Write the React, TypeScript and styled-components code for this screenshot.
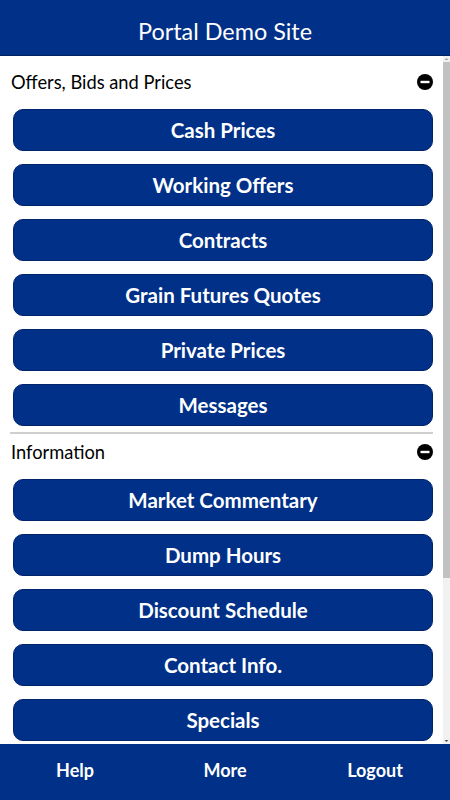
import styled, { createGlobalStyle } from 'styled-components';

const BLUE = '#003087';

const sections = [
  {
    title: 'Offers, Bids and Prices',
    links: ['Cash Prices', 'Working Offers', 'Contracts', 'Grain Futures Quotes', 'Private Prices', 'Messages'],
  },
  {
    title: 'Information',
    links: ['Market Commentary', 'Dump Hours', 'Discount Schedule', 'Contact Info.', 'Specials'],
  },
];

const MinusIcon = () => (
  <svg width="16" height="16" viewBox="0 0 16 16">
    <circle cx="8" cy="8" r="8" fill="#000" />
    <rect x="3.5" y="6.8" width="9" height="2.4" fill="#fff" />
  </svg>
);

const Arrow = ({ up, color }: { up?: boolean; color: string }) => (
  <svg width="7" height="6" viewBox="0 0 7 6">
    <polygon points={up ? '3.5,2 5.5,4 1.5,4' : '1.5,2 5.5,2 3.5,4'} fill={color} />
  </svg>
);

export default function App() {
  return (
    <>
      <GlobalStyle />
      <Page>
        <Header>Portal Demo Site</Header>
        <ScrollArea>
          <Content>
            {sections.map((section, i) => (
              <Section key={section.title} $divided={i < sections.length - 1}>
                <SectionHead>
                  <SectionTitle>{section.title}</SectionTitle>
                  <MinusIcon />
                </SectionHead>
                <LinkList>
                  {section.links.map((link) => (
                    <LinkButton key={link}>{link}</LinkButton>
                  ))}
                </LinkList>
              </Section>
            ))}
          </Content>
          <ScrollTrack>
            <Arrow up color="#a3a3a3" />
            <ThumbLane>
              <Thumb />
            </ThumbLane>
            <Arrow color="#505050" />
          </ScrollTrack>
        </ScrollArea>
        <Footer>
          <FooterItem>Help</FooterItem>
          <FooterItem>More</FooterItem>
          <FooterItem>Logout</FooterItem>
        </Footer>
      </Page>
    </>
  );
}

const GlobalStyle = createGlobalStyle`
  html, body {
    margin: 0;
    padding: 0;
    height: 100%;
    font-family: Lato, 'Liberation Sans', sans-serif;
  }
  #root {
    height: 100%;
  }
`;

const Page = styled.div`
  height: 800px;
  display: flex;
  flex-direction: column;
  background: #fff;
`;

const Header = styled.div`
  height: 56px;
  box-sizing: border-box;
  padding-top: 6px;
  flex: 0 0 auto;
  background: ${BLUE};
  color: #fff;
  font-size: 23.4px;
  display: flex;
  align-items: center;
  justify-content: center;
  border-bottom: 1px solid #00205f;
`;

const ScrollArea = styled.div`
  flex: 1;
  min-height: 0;
  display: flex;
`;

const Content = styled.div`
  flex: 1;
  overflow: hidden;
  padding-top: 8px;
`;

const ScrollTrack = styled.div`
  width: 7px;
  flex: 0 0 7px;
  background: #f1f1f1;
  display: flex;
  flex-direction: column;
`;

const ThumbLane = styled.div`
  flex: 1;
`;

const Thumb = styled.div`
  height: 516px;
  background: #c1c1c1;
`;

const Section = styled.section<{ $divided: boolean }>`
  margin: 0 10px;
  padding-bottom: 6px;
  border-bottom: ${(p) => (p.$divided ? '2px solid #cfcfcf' : 'none')};
`;

const SectionHead = styled.div`
  height: 36px;
  display: flex;
  align-items: center;
  justify-content: space-between;
  padding-left: 1px;
`;

const SectionTitle = styled.span`
  font-size: 18.3px;
  color: #000;
`;

const LinkList = styled.div`
  display: flex;
  flex-direction: column;
  gap: 13px;
  margin-top: 9px;
  padding-left: 3px;
`;

const LinkButton = styled.button`
  height: 42px;
  border: 1px solid #00246a;
  border-radius: 10px;
  background: ${BLUE};
  color: #fff;
  font-family: Lato, 'Liberation Sans', sans-serif;
  font-weight: 700;
  font-size: 20.5px;
  cursor: pointer;
`;

const Footer = styled.div`
  height: 56px;
  flex: 0 0 auto;
  background: ${BLUE};
  display: grid;
  grid-template-columns: repeat(3, 1fr);
  align-items: center;
`;

const FooterItem = styled.div`
  color: #fff;
  font-weight: 700;
  font-size: 18px;
  text-align: center;
  padding-bottom: 4px;
`;
